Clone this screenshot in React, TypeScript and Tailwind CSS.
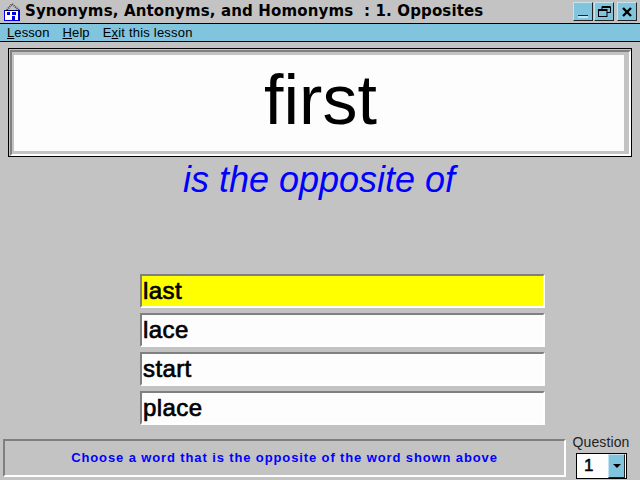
const answers = [
  { word: "last", active: true },
  { word: "lace", active: false },
  { word: "start", active: false },
  { word: "place", active: false },
];

function AppIcon() {
  return (
    <svg width="18" height="20" viewBox="0 0 18 20" className="shrink-0">
      <path d="M3 8 L8 2 L15 8" fill="none" stroke="#444" strokeWidth="2" strokeDasharray="1 1" />
      <rect x="0.5" y="8.5" width="14" height="10" fill="#fff" stroke="#0000e0" />
      <path d="M15.5 8 V19" stroke="#000" />
      <path d="M2 8.5 H14" stroke="#000" strokeDasharray="2 1" />
      <rect x="3" y="10" width="3" height="3" fill="#0000e0" />
      <rect x="8" y="10" width="4" height="3" fill="#0000e0" />
      <rect x="8" y="14" width="3" height="4" fill="#0000e0" />
    </svg>
  );
}

function WinButton({ children }: { children: React.ReactNode }) {
  return (
    <div className="w-[20px] h-[19px] flex items-center justify-center bg-[#80c4de] border border-t-[#c4e4f0] border-l-[#c4e4f0] border-r-[#222] border-b-[#222]">
      {children}
    </div>
  );
}

export default function App() {
  return (
    <div className="w-[640px] h-[480px] bg-[#c3c3c3] flex flex-col overflow-hidden font-['Liberation_Sans',sans-serif] text-black">
      {/* Title bar */}
      <div className="h-[24px] flex items-center pl-[4px] pr-[3px] border-b border-black">
        <AppIcon />
        <span className="ml-[3px] text-[15px] font-bold whitespace-pre font-['DejaVu_Sans',sans-serif] tracking-[0.14px]">
          Synonyms, Antonyms, and Homonyms  : 1. Opposites
        </span>
        <div className="ml-auto flex items-center">
          <WinButton>
            <svg width="10" height="14" viewBox="0 0 10 14">
              <rect x="0" y="10" width="10" height="1" fill="#222" />
              <rect x="0" y="11" width="10" height="2" fill="#c4e4f0" />
            </svg>
          </WinButton>
          <div className="ml-[1px]">
            <WinButton>
              <svg width="13" height="11" viewBox="0 0 13 11" fill="none" stroke="#000">
                <path d="M4 3 V0.5 H12.5 V6.5 H9" />
                <path d="M4 1.5 H12" />
                <rect x="0.5" y="3.5" width="8.5" height="7" />
                <path d="M0 4.5 H9" />
              </svg>
            </WinButton>
          </div>
          <div className="ml-[3px]">
            <WinButton>
              <svg width="10" height="10" viewBox="0 0 10 10" stroke="#000" strokeWidth="2.4">
                <path d="M1 1 L9 9 M9 1 L1 9" />
              </svg>
            </WinButton>
          </div>
        </div>
      </div>

      {/* Menu */}
      <div className="h-[18px] bg-[#80c4de] border-b border-black flex items-center pl-[7px] gap-[13px] text-[13px] tracking-[0.1px]">
        <span><u>L</u>esson</span>
        <span><u>H</u>elp</span>
        <span className="tracking-[0.2px]">E<u>x</u>it this lesson</span>
      </div>

      {/* Word */}
      <div className="mt-[6px] mx-[8px] h-[109px] border border-black pt-[1px] pl-[1px]">
        <div className="h-full border-2 border-t-[#808080] border-l-[#808080] border-r-white border-b-white pt-[3px] pl-[2px] pr-[5px] pb-[3px]">
          <div className="h-full bg-[#fdfdfd] flex items-center justify-center text-[70px] pb-[5px] pl-[3px]">first</div>
        </div>
      </div>

      <div className="mt-[2px] h-[42px] flex items-center justify-center italic text-[36px] text-[#0000ff] pr-[2px]">
        is the opposite of
      </div>

      {/* Answers */}
      <div className="mt-[73px] ml-[140px] w-[405px] flex flex-col gap-[5px]">
        {answers.map((a) => (
          <div
            key={a.word}
            className={`h-[34px] flex items-center pl-[1px] text-[24px] tracking-[0.4px] [-webkit-text-stroke:0.7px_black] border-2 border-t-[#808080] border-l-[#808080] border-r-white border-b-white ${a.active ? "bg-[#ffff00]" : "bg-[#fdfdfd]"}`}
          >
            {a.word}
          </div>
        ))}
      </div>

      {/* Footer */}
      <div className="mt-[9px] ml-[3px] flex items-start">
        <div className="mt-[5px] w-[563px] h-[38px] flex items-center justify-center border-2 border-t-[#808080] border-l-[#808080] border-r-white border-b-white text-[13px] font-bold text-[#0000ff] tracking-[0.88px]">
          Choose a word that is the opposite of the word shown above
        </div>
        <div className="ml-[5px] w-[60px] flex flex-col items-center">
          <span className="text-[14px] leading-[16px] text-[#222] tracking-[0.1px]">Question</span>
          <div className="mt-[3px] ml-[1px] w-[51px] h-[26px] bg-[#fdfdfd] border border-black flex items-center justify-between pl-[7px] pr-[1px]">
            <span className="text-[17px] [-webkit-text-stroke:0.5px_black]">1</span>
            <div className="w-[17px] h-[24px] bg-[#80c4de] border border-t-[#c4e4f0] border-l-[#c4e4f0] border-r-[#222] border-b-[#222] flex items-center justify-center">
              <div className="w-0 h-0 border-x-[4px] border-x-transparent border-t-[4px] border-t-black" />
            </div>
          </div>
        </div>
      </div>
    </div>
  );
}
